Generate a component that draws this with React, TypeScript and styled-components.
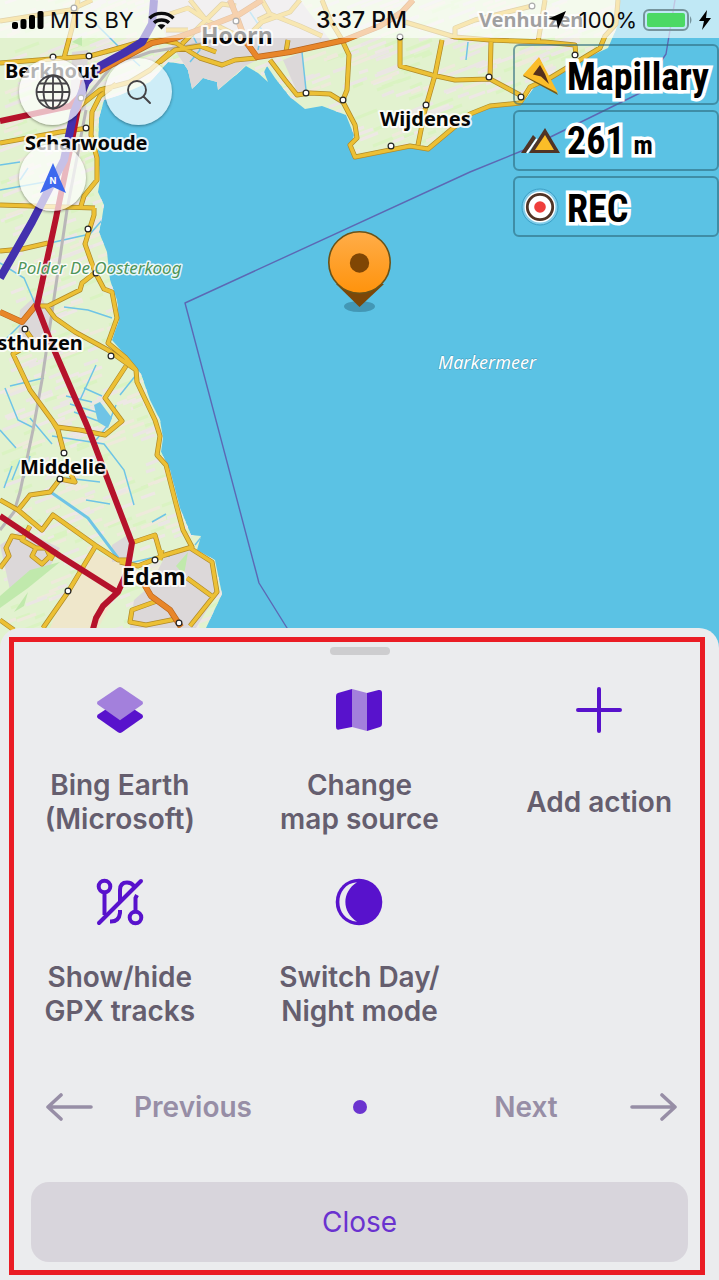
import React from "react";
import styled, { createGlobalStyle } from "styled-components";

const GlobalStyle = createGlobalStyle`
  *, *::before, *::after { box-sizing: border-box; }
  body { margin: 0; background: #ebecee; font-family: Inter, "Liberation Sans", sans-serif; }
  button { border: 0; padding: 0; background: none; font: inherit; color: inherit; cursor: pointer; }
  svg { display: block; flex: none; }
`;

const Screen = styled.div`
  position: relative;
  display: flex;
  flex-direction: column;
  min-height: 100vh;
  overflow: hidden;
  background: #5bc2e4;
`;

const MapCanvas = styled.svg`
  position: absolute;
  inset: 0;
  width: 100%;
  height: 100%;
`;

const StatusBar = styled.header`
  position: relative;
  display: grid;
  grid-template-columns: 1fr auto 1fr;
  align-items: center;
  height: 38px;
  padding: 2px 8px 0 12px;
  background: rgba(255, 255, 255, 0.62);
  font-size: 22px;
  line-height: 28px;
  color: #0b0b0d;
`;

const StatusGroup = styled.div<{ $end?: boolean }>`
  display: flex;
  align-items: center;
  justify-content: ${(p) => (p.$end ? "flex-end" : "flex-start")};
  gap: 6px;
`;

const Carrier = styled.span`
  margin-right: 8px;
`;

const Clock = styled.time`
  font-size: 23px;
  font-weight: 500;
`;

const MapOverlay = styled.main`
  position: relative;
  flex: 1;
  display: flex;
  justify-content: space-between;
  align-items: flex-start;
`;

const MapControls = styled.nav`
  display: grid;
  grid-template-columns: 67px 67px;
  gap: 19px;
  padding: 20px 0 0 19px;
`;

const RoundButton = styled.button`
  display: grid;
  place-items: center;
  width: 67px;
  height: 67px;
  border-radius: 50%;
  background: rgba(255, 255, 255, 0.7);
  box-shadow: 0 1px 3px rgba(0, 0, 0, 0.4);
`;

const Widgets = styled.aside`
  display: flex;
  flex-direction: column;
  gap: 5px;
  width: 206px;
  padding-top: 6px;
`;

const Widget = styled.button`
  display: flex;
  align-items: center;
  gap: 6px;
  height: 61px;
  padding-left: 6px;
  border: 2px solid rgba(45, 105, 125, 0.6);
  border-radius: 6px;
`;

const WidgetValue = styled.span`
  padding-top: 4px;
  font-family: "Liberation Sans Narrow", "Roboto Condensed", "Liberation Sans", sans-serif;
  font-size: 38px;
  line-height: 44px;
  font-weight: 700;
  color: #000;
  white-space: nowrap;
  -webkit-text-stroke: 7px #fff;
  paint-order: stroke fill;
  stroke-linejoin: round;
`;

const Unit = styled.small`
  font-size: 26px;
`;

const Sheet = styled.section`
  position: relative;
  padding: 19px 0 18px;
  border-radius: 20px 20px 0 0;
  background: #ebecee;
`;

const Highlight = styled.div`
  position: absolute;
  inset: 9px 14px 5px 9px;
  border: 5px solid #ea1c24;
  pointer-events: none;
`;

const Grabber = styled.div`
  width: 60px;
  height: 8px;
  margin: 0 auto 31px;
  border-radius: 4px;
  background: #cdcdcf;
`;

const Actions = styled.div`
  display: grid;
  grid-template-columns: repeat(3, 1fr);
  row-gap: 42px;
`;

const Action = styled.button`
  display: flex;
  flex-direction: column;
  align-items: center;
  gap: 34px;
`;

const ActionLabel = styled.span`
  display: grid;
  align-items: center;
  min-height: 68px;
  font-size: 28px;
  line-height: 34px;
  font-weight: 600;
  color: #655e6e;
  white-space: pre-line;
  text-align: center;
`;

const Pager = styled.div`
  display: grid;
  grid-template-columns: 1fr auto 1fr;
  align-items: center;
  margin: 55px 0 51px;
`;

const PagerButton = styled.button<{ $end?: boolean }>`
  display: flex;
  align-items: center;
  justify-content: ${(p) => (p.$end ? "flex-end" : "flex-start")};
  gap: ${(p) => (p.$end ? 44 : 40)}px;
  height: 48px;
  padding: ${(p) => (p.$end ? "0 42px 0 0" : "0 0 0 46px")};
  font-size: 28px;
  line-height: 34px;
  font-weight: 600;
  color: #978ea6;
`;

const PagerLabel = styled.span`
  min-width: 120px;
  text-align: center;
`;

const PageDot = styled.span`
  width: 14px;
  height: 14px;
  border-radius: 50%;
  background: #6b34cf;
`;

const CloseButton = styled.button`
  display: block;
  width: calc(100% - 62px);
  height: 80px;
  margin: 0 auto;
  border-radius: 18px;
  background: #d8d5dc;
  font-size: 28px;
  line-height: 34px;
  color: #6a32cf;
`;

/* ---- Map data ---- */

const LAND =
  "M0 0H620L617 27L608 48L580 61L535 86L521 105L490 108L470 116L446 136L429 151L410 148L385 153L355 159L350 148L354 135L346 115L322 106L305 109L290 97L275 78L267 66L264 72L268 82L258 73L246 66L237 74L218 90L217 82L203 78L192 89L188 70L184 64L168 62L150 82L120 95L104 100L99 118L98 150L100 180L98 192L104 205L102 218L99 232L107 252L110 280L117 300L119 320L112 340L126 356L141 374L150 400L160 420L163 438L161 452L170 470L180 508L191 535L201 536L197 550L215 560L222 594L206 628L196 660H0Z";

const TOWN = [
  "M150 0H300L330 40L275 58L257 60L245 66L218 90L203 78L192 89L184 64L168 40Z",
  "M283 60L302 52L306 92L298 94Z",
  "M72 52L88 50L86 110L70 112Z",
  "M20 310L40 292L52 322L44 345L18 340Z",
  "M112 545L132 532L128 560L112 562Z",
  "M165 556L192 548L213 562L218 592L196 628H130L134 600L150 586Z",
  "M0 545L22 530L60 548L48 570L10 590Z",
];

const FOREST = ["M0 596L30 570L60 562L28 588L0 608Z", "M176 566L188 552L184 575Z", "M72 42L82 36L82 46Z", "M14 612L28 592L24 606Z"];

const STREAMS = [
  "M96 24L122 50L140 66",
  "M0 263L24 278L36 306",
  "M50 243L90 234L104 218",
  "M64 307L88 310L112 318",
  "M130 563L155 557L170 556",
  "M0 345L20 325",
  "M5 388L18 420L34 428M10 386L44 378",
  "M0 430L16 448M30 418L52 444",
  "M52 436L104 444L124 470L134 505",
  "M86 500L110 504M152 522L166 514",
  "M96 440L108 425L116 405",
  "M66 478L100 482",
  "M66 396L92 402M70 404L96 412M74 412L98 421M84 388L102 396",
  "M190 30L200 50L190 62M250 12L262 30L258 50",
  "M302 52L306 90M468 42L466 60",
  "M0 165L20 162M0 190L56 180M20 180L28 168",
  "M12 480L20 460M4 488L12 466M24 478L30 456",
  "M120 395L136 375M80 400L96 365",
  "M195 545L203 535",
];

const YELLOW = [
  "M0 21L70 10L92 0",
  "M78 0L72 28L64 58",
  "M0 63L90 56L112 50L140 42L160 40L176 43L200 58L222 65L235 60L257 58",
  "M160 62L175 50L200 46L216 52",
  "M0 143L60 132L88 128",
  "M0 205L95 208",
  "M80 106L100 90L130 82L150 70L170 52",
  "M116 84L100 96L92 112L91 135L97 158L97 180L84 196L81 206",
  "M94 208L94 215L85 244L95 272L104 289L112 292L117 318L108 343L126 358L136 370L137 382L155 420L160 436L157 455L166 465L176 504L183 530L192 547L165 555L138 566L120 562",
  "M0 251L22 249L48 243",
  "M36 306L48 306L80 290L82 283L96 272",
  "M46 306L55 318L75 332L108 350L136 370",
  "M27 332L34 342M20 350L13 354L30 390L57 427L80 430L105 435L122 421L105 398L126 366",
  "M52 420L58 430L64 453",
  "M64 462L75 482L60 479L50 492L30 495L18 510",
  "M0 500L18 510L42 530L53 515L95 545L118 560L130 560",
  "M95 547L68 592L43 628",
  "M30 526L22 540L36 548L32 556L42 564L50 556L46 548L36 548M22 538L12 536L6 548L9 556L0 568M50 560L56 550",
  "M0 620L14 630",
  "M134 542L155 535L161 556",
  "M190 548L212 562L217 592L190 626M187 578L213 597M157 601L132 610L130 622L146 625L176 619",
  "M162 550L160 560",
  "M270 60L285 80L297 95L310 93L330 94L343 102L355 125L357 138L350 145L355 157L385 151L410 146L428 149L446 134L470 114L490 106L520 103L530 87L550 78L600 48L605 36L616 24L618 0",
  "M322 0L330 20L341 38L349 55L347 90L343 100",
  "M400 37L400 66L432 75L455 80L490 79L520 95",
  "M442 40L435 75L425 110L418 145",
  "M405 22L455 37L490 40L545 42L575 45L576 56M455 37L455 28L475 20L532 6",
  "M491 42L490 78M545 0L538 42",
  "M288 40L286 52",
  "M262 0L270 14L300 26L322 36M190 0L206 20L230 32L248 40M200 26L222 4L236 6M250 34L262 22L290 12L300 0M270 14L258 20",
  "M170 14L188 8L206 20L182 44M166 30L188 30",
];

const ORANGE = ["M98 72L135 52L152 43L176 38L212 25L240 14L262 0", "M230 0L238 20L246 42L257 57L290 52L345 40L380 26L402 12L413 0", "M0 312L22 322L36 305", "M144 584L151 596L170 610L181 627"];

const RED = ["M0 121L70 106L80 96", "M84 78L72 140L56 218L37 306L52 345L88 428L132 543L127 572L118 592L103 606L96 618L90 640", "M0 516L60 556L117 592"];

const MOTORWAY = "M154 0L152 24L142 42L124 53L100 66L86 82L74 112L64 160L32 222L0 278";
const RAIL = ["M86 110L67 210L42 380L33 430L20 492L14 512L0 530", "M86 98L112 66L150 52L200 44L236 36"];
const BORDER = "M675 0L666 54L640 93L524 150L470 172L185 303L259 583L292 636";

const STOPS: [number, number][] = [
  [74, 8], [89, 56], [53, 57], [81, 98], [86, 128], [88, 229], [96, 273], [25, 329], [111, 356], [64, 453], [60, 479],
  [155, 560], [68, 591], [179, 623], [236, 21], [306, 93], [343, 100], [400, 37], [426, 105], [391, 146], [489, 77], [521, 97], [532, 6], [575, 55],
];

type Place = { name: string; x: number; y: number; size: number };
const PLACES: Place[] = [
  { name: "Hoorn", x: 201, y: 44, size: 23 },
  { name: "Venhuizen", x: 479, y: 27, size: 20 },
  { name: "Berkhout", x: 5, y: 78, size: 20 },
  { name: "Scharwoude", x: 25, y: 150, size: 20 },
  { name: "Wijdenes", x: 380, y: 126, size: 20 },
  { name: "Oosthuizen", x: -31, y: 350, size: 20 },
  { name: "Middelie", x: 20, y: 474, size: 20 },
  { name: "Edam", x: 122, y: 585, size: 23 },
];

/* Short slanted strokes that give the fields their mottled look. */
const FIELD_COLOURS = ["#eee8e5", "#daf3c2", "#eeeadb", "#ebe6e4"];
const fieldStrokes = (() => {
  let seed = 17;
  const next = () => {
    seed = (seed * 16807) % 2147483647;
    return seed / 2147483647;
  };
  const groups: string[] = ["", "", "", ""];
  for (let i = 0; i < 2400; i += 1) {
    const x = Math.round(next() * 620);
    const y = Math.round(next() * 640);
    const length = 8 + Math.round(next() * 18);
    groups[i % 4] += `M${x} ${y}l${length} ${-Math.round(length / 2.6)}`;
  }
  return groups;
})();

function MapArt() {
  return (
    <MapCanvas viewBox="0 0 719 1280" preserveAspectRatio="xMinYMin slice" role="img" aria-label="Map of Markermeer">
      <defs>
        <clipPath id="land"><path d={LAND} /></clipPath>
        <linearGradient id="pin" x1="0" y1="0" x2="0" y2="1">
          <stop offset="0" stopColor="#ffad49" />
          <stop offset="1" stopColor="#ff930c" />
        </linearGradient>
      </defs>
      <path d={LAND} fill="#e2f2cf" />
      <g clipPath="url(#land)" fill="none">
        {fieldStrokes.map((d, i) => <path key={i} d={d} stroke={FIELD_COLOURS[i]} strokeWidth="3" />)}
        <path d="M62 600L95 552L128 566L117 592L92 640H45Z" fill="#efe7cb" />
        {TOWN.map((d) => <path key={d} d={d} fill="#dcd8d9" />)}
        {FOREST.map((d) => <path key={d} d={d} fill="#c0e9ac" />)}
        {STREAMS.map((d) => <path key={d} d={d} stroke="#6fc4e6" strokeWidth="1.5" />)}
        <path d="M52 493L88 518L118 558" stroke="#6fc4e6" strokeWidth="3" />
        <path d="M94 405L100 402L112 418L108 428L98 422Z" fill="#6fc4e6" />
      </g>
      <g fill="none" strokeLinejoin="round">
        {RAIL.map((d) => <path key={d} d={d} stroke="#b9b7b8" strokeWidth="3" />)}
        <path d={YELLOW.join("")} stroke="#b08a28" strokeWidth="5" />
        <path d={YELLOW.join("")} stroke="#ecc035" strokeWidth="3.6" />
        <path d={ORANGE.join("")} stroke="#b8651d" strokeWidth="6" />
        <path d={ORANGE.join("")} stroke="#e8862a" strokeWidth="4.8" />
        <path d={RED.join("")} stroke="#b5122b" strokeWidth="6" />
        <path d={MOTORWAY} stroke="#4331ae" strokeWidth="8" />
        <path d={BORDER} stroke="#5c68b4" strokeWidth="1.4" />
      </g>
      <g fill="#fff" stroke="#222" strokeWidth="1.2">
        {STOPS.map(([x, y]) => <circle key={`${x}-${y}`} cx={x} cy={y} r="2.9" />)}
      </g>
      <g fontFamily="'Noto Sans', sans-serif" strokeLinejoin="round" style={{ paintOrder: "stroke" }}>
        {PLACES.map((p) => (
          <text key={p.name} x={p.x} y={p.y} fontSize={p.size} fontWeight="700" stroke="#fff" strokeOpacity="0.85" strokeWidth="4" fill="#060606">{p.name}</text>
        ))}
        <text x="17" y="274" fontSize="17" fontStyle="italic" stroke="#fff" strokeOpacity="0.85" strokeWidth="3" fill="#4f9658">Polder De Oosterkoog</text>
        <text x="438" y="369" fontSize="18" fontStyle="italic" stroke="#459bb9" strokeWidth="1" fill="#fff">Markermeer</text>
      </g>
      <ellipse cx="359.500" cy="306.500" rx="15.500" ry="5.500" fill="#4397b5" />
      <path d="M336 284L359.500 307L384 284Z" fill="#7c4708" />
      <circle cx="359.500" cy="262.500" r="30.700" fill="url(#pin)" stroke="#6b5318" strokeWidth="1.600" />
      <circle cx="359.500" cy="263" r="9.700" fill="#804604" />
    </MapCanvas>
  );
}

/* ---- Icons ---- */

const SignalIcon = () => (
  <svg width="32" height="20" viewBox="0 0 32 20">
    <rect x="0" y="12" width="6" height="7" rx="2" />
    <rect x="8.500" y="9" width="6" height="10" rx="2" />
    <rect x="17" y="5" width="6" height="14" rx="2" />
    <rect x="25.500" y="1" width="6" height="18" rx="2" />
  </svg>
);

const WifiIcon = () => (
  <svg width="27" height="19" viewBox="0 0 27 19" fill="none" stroke="#0b0b0d" strokeWidth="3.400">
    <path d="M1.500 7.200C8 .7 19 .7 25.500 7.200" />
    <path d="M6 11.800C10 8 17 8 21 11.800" />
    <path d="M13.500 18.500L9.600 14.600C11.800 12.700 15.200 12.700 17.400 14.600Z" fill="#0b0b0d" stroke="none" />
  </svg>
);

const LocationIcon = () => (
  <svg width="26" height="20" viewBox="0 0 26 20"><path d="M19 1L11 19L9.500 10.500L1 9Z" /></svg>
);

const BatteryIcon = () => (
  <svg width="50" height="22" viewBox="0 0 50 22">
    <rect x="1" y="1" width="44" height="20" rx="5" fill="none" stroke="#76949c" strokeWidth="2" />
    <rect x="4" y="4" width="38" height="14" rx="2" fill="#4cd964" />
    <path d="M47 7Q50 11 47 15Z" fill="#76949c" />
  </svg>
);

const BoltIcon = () => (
  <svg width="12" height="20" viewBox="0 0 12 20"><path d="M8 0L0 11H5L3 20L12 8H7Z" /></svg>
);

const GlobeIcon = () => (
  <svg width="36" height="36" viewBox="0 0 36 36" fill="none" stroke="#444347" strokeWidth="1.800">
    <circle cx="18" cy="18" r="16.500" />
    <ellipse cx="18" cy="18" rx="9.500" ry="16.500" />
    <path d="M18 1.500V34.500M1.500 18H34.500M4 9.500H32M4 26.500H32" />
  </svg>
);

const SearchIcon = () => (
  <svg width="26" height="26" viewBox="0 0 26 26" fill="none" stroke="#444347" strokeWidth="1.900" strokeLinecap="round">
    <circle cx="11" cy="11" r="9" />
    <path d="M17.500 17.500L24 24" />
  </svg>
);

const CompassIcon = () => (
  <svg width="28" height="32" viewBox="0 0 28 32">
    <path d="M14 1L27 31L14 25L1 31Z" fill="#3d68ee" />
    <text x="14" y="22" fontSize="9" fontWeight="700" textAnchor="middle" fill="#fff">N</text>
  </svg>
);

const PointerIcon = () => (
  <svg width="40" height="40" viewBox="0 0 40 40">
    <path d="M18 3L2 21L37 40Z" fill="#775a13" />
    <path d="M18 2L2 20L37 38Z" fill="#fbbd28" />
    <path d="M19 10L12 19.500L20 21.500L28 29L24 19Z" fill="#55301c" />
  </svg>
);

const AltitudeIcon = () => (
  <svg width="40" height="32" viewBox="0 0 40 32">
    <path d="M0 28L12 10L15 13L5 28Z" fill="#503426" />
    <path d="M6 28L16 14" stroke="#fff" strokeWidth="2" />
    <path d="M24 3L39 28H8Z" fill="#503426" />
    <path d="M24 10L33 25H14Z" fill="#fbbd28" />
  </svg>
);

const RecordIcon = () => (
  <svg width="40" height="40" viewBox="0 0 40 40">
    <circle cx="19" cy="20" r="18" fill="#81cdea" stroke="#399fc6" strokeWidth="1" />
    <circle cx="19" cy="20" r="15.500" fill="#fff" />
    <circle cx="19" cy="20" r="12.700" fill="#fff" stroke="#503426" strokeWidth="2.800" />
    <circle cx="19" cy="20" r="5.800" fill="#ef3e3c" />
  </svg>
);

const LayersIcon = () => (
  <svg width="48" height="48" viewBox="0 0 48 48">
    <path d="M2 28.500L24 14L46 28.500Q48 30.500 46 32.300L26 46.300Q24 47.600 22 46.300L2 32.300Q0 30.500 2 28.500Z" fill="#5812cc" />
    <path d="M22 1.700Q24 .4 26 1.700L46 15.200Q48 17 46 18.800L24 34.200L2 18.800Q0 17 2 15.200Z" fill="#a380dc" />
  </svg>
);

const MapIcon = () => (
  <svg width="48" height="48" viewBox="0 0 48 48">
    <path d="M17 3L3 7Q1 7.700 1 10V41Q1 44.500 4 43.600L17 41Z" fill="#5812cc" />
    <path d="M17 3L32 7V45L17 41Z" fill="#a380dc" />
    <path d="M32 7L43.500 4Q47 3.300 47 7V38Q47 40.300 45 41L32 45Z" fill="#5812cc" />
  </svg>
);

const PlusIcon = () => (
  <svg width="48" height="48" viewBox="0 0 48 48" stroke="#5812cc" strokeWidth="4" strokeLinecap="round">
    <path d="M24 3V45M3 24H45" />
  </svg>
);

const TracksIcon = () => (
  <svg width="48" height="48" viewBox="0 0 48 48" fill="none" stroke="#5812cc" strokeWidth="4">
    <circle cx="8.500" cy="8.500" r="5.800" />
    <circle cx="39.500" cy="39.500" r="5.800" />
    <path d="M8.500 14V37" />
    <path d="M39.500 34V20L41 17" />
    <path d="M24 23V12Q24 4.500 31 4.500Q35.500 4.500 38 8" />
    <path d="M24 32V35Q23 43.500 15 43.500H14" />
    <path d="M3 45L45 3" strokeLinecap="round" />
  </svg>
);

const NightIcon = () => (
  <svg width="48" height="48" viewBox="0 0 48 48">
    <circle cx="24" cy="24" r="23.300" fill="#5812cc" />
    <path d="M22 4.300C-1.500 6 -1.500 42 22 43.700C6.500 34 6.500 14 22 4.300Z" fill="#ebecee" />
  </svg>
);

const ArrowIcon = ({ right }: { right?: boolean }) => (
  <svg width="47" height="28" viewBox="0 0 47 28" fill="none" stroke="#978ea6" strokeWidth="3.600" strokeLinecap="round" strokeLinejoin="round">
    <path d={right ? "M2 14H45M32 2L45 14L32 26" : "M45 14H2M15 2L2 14L15 26"} />
  </svg>
);

const ACTIONS = [
  { label: "Bing Earth\n(Microsoft)", Icon: LayersIcon },
  { label: "Change\nmap source", Icon: MapIcon },
  { label: "Add action", Icon: PlusIcon },
  { label: "Show/hide\nGPX tracks", Icon: TracksIcon },
  { label: "Switch Day/\nNight mode", Icon: NightIcon },
];

export default function App() {
  return (
    <Screen>
      <GlobalStyle />
      <MapArt />
      <StatusBar>
        <StatusGroup>
          <SignalIcon />
          <Carrier>MTS BY</Carrier>
          <WifiIcon />
        </StatusGroup>
        <Clock>3:37 PM</Clock>
        <StatusGroup $end>
          <LocationIcon />
          <span>100%</span>
          <BatteryIcon />
          <BoltIcon />
        </StatusGroup>
      </StatusBar>
      <MapOverlay>
        <MapControls aria-label="Map controls">
          <RoundButton aria-label="Configure map"><GlobeIcon /></RoundButton>
          <RoundButton aria-label="Search"><SearchIcon /></RoundButton>
          <RoundButton aria-label="Compass"><CompassIcon /></RoundButton>
        </MapControls>
        <Widgets>
          <Widget><PointerIcon /><WidgetValue>Mapillary</WidgetValue></Widget>
          <Widget><AltitudeIcon /><WidgetValue>261 <Unit>m</Unit></WidgetValue></Widget>
          <Widget><RecordIcon /><WidgetValue>REC</WidgetValue></Widget>
        </Widgets>
      </MapOverlay>
      <Sheet aria-label="Quick actions">
        <Grabber />
        <Actions>
          {ACTIONS.map(({ label, Icon }) => (
            <Action key={label}>
              <Icon />
              <ActionLabel>{label}</ActionLabel>
            </Action>
          ))}
        </Actions>
        <Pager>
          <PagerButton><ArrowIcon /><PagerLabel>Previous</PagerLabel></PagerButton>
          <PageDot />
          <PagerButton $end><PagerLabel>Next</PagerLabel><ArrowIcon right /></PagerButton>
        </Pager>
        <CloseButton>Close</CloseButton>
        <Highlight />
      </Sheet>
    </Screen>
  );
}
